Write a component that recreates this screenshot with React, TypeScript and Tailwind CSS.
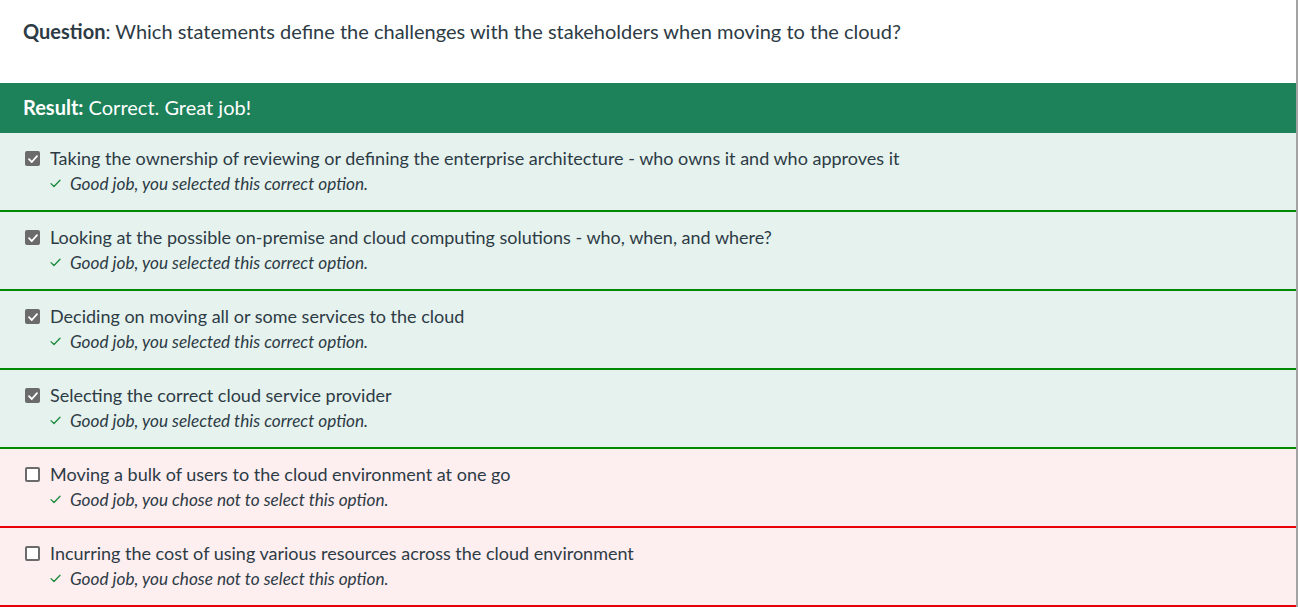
import React from "react";

type Option = {
  text: string;
  selected: boolean;
  correct: boolean;
};

const options: Option[] = [
  { text: "Taking the ownership of reviewing or defining the enterprise architecture - who owns it and who approves it", selected: true, correct: true },
  { text: "Looking at the possible on-premise and cloud computing solutions - who, when, and where?", selected: true, correct: true },
  { text: "Deciding on moving all or some services to the cloud", selected: true, correct: true },
  { text: "Selecting the correct cloud service provider", selected: true, correct: true },
  { text: "Moving a bulk of users to the cloud environment at one go", selected: false, correct: false },
  { text: "Incurring the cost of using various resources across the cloud environment", selected: false, correct: false },
];

function CheckBox({ checked }: { checked: boolean }) {
  if (checked) {
    return (
      <div className="w-[15px] h-[15px] rounded-[2px] bg-[#6b6b6b] flex items-center justify-center shrink-0">
        <svg width="12" height="12" viewBox="0 0 12 12" fill="none">
          <path d="M2 6.2 L4.8 9 L10 3.2" stroke="#ffffff" strokeWidth="1.8" strokeLinecap="round" strokeLinejoin="round" />
        </svg>
      </div>
    );
  }
  return <div className="w-[15px] h-[15px] rounded-[2px] border-2 border-[#6b6b6b] bg-white shrink-0"></div>;
}

function Tick() {
  return (
    <svg width="11" height="9" viewBox="0 0 11 9" fill="none" className="shrink-0">
      <path d="M1 4.6 L4 7.5 L10 1.2" stroke="#1b8a3a" strokeWidth="1.3" strokeLinecap="round" strokeLinejoin="round" />
    </svg>
  );
}

export default function App() {
  return (
    <div className="w-[1298px] h-[607px] bg-white overflow-hidden flex font-['Lato',sans-serif] text-[#2d3b45]">
      <div className="flex-1 flex flex-col border-r-2 border-[#a3a3a3]">
        <div className="h-[83px] pl-[23px] pt-[18px] text-[20px] leading-[26px]">
          <span className="font-bold">Question</span>: Which statements define the challenges with the stakeholders when moving to the cloud?
        </div>
        <div className="h-[50px] bg-[#1d8159] text-white pl-[23px] pb-[2px] flex items-center text-[20px]">
          <span className="font-bold">Result:</span>&nbsp;Correct. Great job!
        </div>
        {options.map((o, i) => (
          <div
            key={i}
            className={`h-[79px] border-b-2 pl-[25px] pt-[15px] ${o.correct ? "bg-[#e6f2ee] border-[#008a00]" : "bg-[#fdeef0] border-[#e8000b]"}`}
          >
            <div className="flex items-center gap-[10px] h-[21px] text-[18px]">
              <CheckBox checked={o.selected} />
              <span>{o.text}</span>
            </div>
            <div className="flex items-center gap-[9px] pl-[25px] mt-[4px] h-[21px] text-[17.2px] italic">
              <Tick />
              <span>{o.selected ? "Good job, you selected this correct option." : "Good job, you chose not to select this option."}</span>
            </div>
          </div>
        ))}
      </div>
    </div>
  );
}
